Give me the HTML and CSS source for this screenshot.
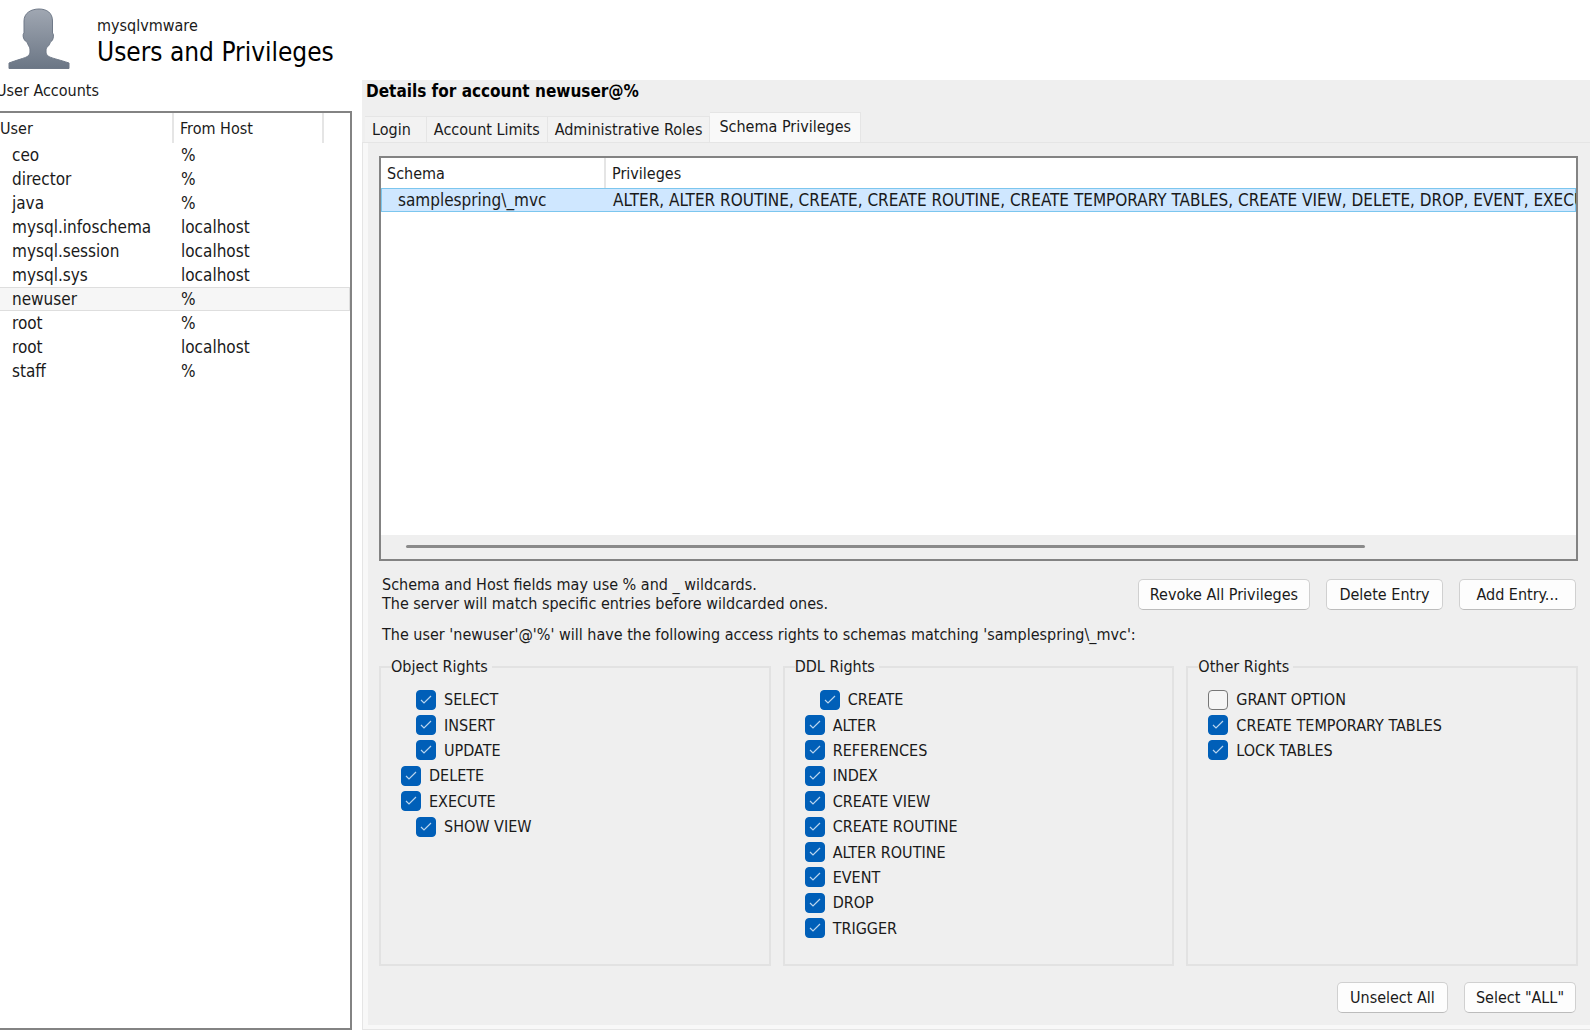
FILE: index.html
```
<!DOCTYPE html>
<html lang="en">
<head>
    <meta charset="UTF-8">
    <meta name="viewport" content="width=device-width, initial-scale=1.0">
    <title>Users and Privileges</title>
    <link rel="stylesheet" href="styles.css">
</head>
<body>
    <header class="page-header">
        <svg class="avatar" viewBox="0 0 62 62" aria-hidden="true">
            <defs>
                <linearGradient id="avatar-fill" x1="0" y1="0" x2="0" y2="1">
                    <stop offset="0" stop-color="#a0a7b2"/>
                    <stop offset="1" stop-color="#6b7685"/>
                </linearGradient>
            </defs>
            <path d="M31 1C39 1 44.5 5 44.5 13L44.500 25C46 26 45.500 30 44.500 32C43.500 33.500 42.500 33.500 42 35C41 39 38 38 38 43C38 50 43 49 61 55V60.500H1V55C17 49 22 50 22 43C22 38 20.500 39 19.500 35C19 33.500 17.500 33.500 16.500 32C15 30 14.500 26 16 25L16 13C16 5 23 1 31 1Z" fill="url(#avatar-fill)" stroke="#6f7988" stroke-width="1"/>
        </svg>
        <div class="page-titles">
            <p class="server-name">mysqlvmware</p>
            <h1>Users and Privileges</h1>
        </div>
    </header>

    <main class="layout">
        <section class="sidebar">
            <h2 class="sidebar-title">User Accounts</h2>
            <div class="list-box user-list">
                <table class="list">
                    <colgroup><col class="col-user"><col class="col-host"><col></colgroup>
                    <thead>
                        <tr><th>User</th><th>From Host</th><th></th></tr>
                    </thead>
                    <tbody>
                        <tr><td>ceo</td><td>%</td><td></td></tr>
                        <tr><td>director</td><td>%</td><td></td></tr>
                        <tr><td>java</td><td>%</td><td></td></tr>
                        <tr><td>mysql.infoschema</td><td>localhost</td><td></td></tr>
                        <tr><td>mysql.session</td><td>localhost</td><td></td></tr>
                        <tr><td>mysql.sys</td><td>localhost</td><td></td></tr>
                        <tr class="current"><td>newuser</td><td>%</td><td></td></tr>
                        <tr><td>root</td><td>%</td><td></td></tr>
                        <tr><td>root</td><td>localhost</td><td></td></tr>
                        <tr><td>staff</td><td>%</td><td></td></tr>
                    </tbody>
                </table>
            </div>
        </section>

        <section class="details">
            <h2 class="details-title">Details for account newuser@%</h2>
            <div class="tabs" role="tablist">
                <button class="tab" role="tab">Login</button>
                <button class="tab" role="tab">Account Limits</button>
                <button class="tab" role="tab">Administrative Roles</button>
                <button class="tab active" role="tab" aria-selected="true">Schema Privileges</button>
            </div>

            <div class="tab-panel" role="tabpanel">
                <div class="list-box schema-list">
                    <div class="list-view">
                        <table class="list">
                            <colgroup><col class="col-schema"><col></colgroup>
                            <thead>
                                <tr><th>Schema</th><th>Privileges</th></tr>
                            </thead>
                            <tbody>
                                <tr class="selected">
                                    <td>samplespring\_mvc</td>
                                    <td>ALTER, ALTER ROUTINE, CREATE, CREATE ROUTINE, CREATE TEMPORARY TABLES, CREATE VIEW, DELETE, DROP, EVENT, EXECUTE</td>
                                </tr>
                            </tbody>
                        </table>
                    </div>
                    <div class="scrollbar"><div class="thumb"></div></div>
                </div>

                <div class="entry-bar">
                    <p class="hint">Schema and Host fields may use % and _ wildcards.<br>The server will match specific entries before wildcarded ones.</p>
                    <div class="buttons">
                        <button class="btn">Revoke All Privileges</button>
                        <button class="btn">Delete Entry</button>
                        <button class="btn">Add Entry...</button>
                    </div>
                </div>

                <p class="summary">The user 'newuser'@'%' will have the following access rights to schemas matching 'samplespring\_mvc':</p>

                <div class="rights">
                    <fieldset class="group">
                        <legend>Object Rights</legend>
                        <div class="checks">
                            <label class="check indent"><input type="checkbox" checked>SELECT</label>
                            <label class="check indent"><input type="checkbox" checked>INSERT</label>
                            <label class="check indent"><input type="checkbox" checked>UPDATE</label>
                            <label class="check"><input type="checkbox" checked>DELETE</label>
                            <label class="check"><input type="checkbox" checked>EXECUTE</label>
                            <label class="check indent"><input type="checkbox" checked>SHOW VIEW</label>
                        </div>
                    </fieldset>
                    <fieldset class="group">
                        <legend>DDL Rights</legend>
                        <div class="checks">
                            <label class="check indent"><input type="checkbox" checked>CREATE</label>
                            <label class="check"><input type="checkbox" checked>ALTER</label>
                            <label class="check"><input type="checkbox" checked>REFERENCES</label>
                            <label class="check"><input type="checkbox" checked>INDEX</label>
                            <label class="check"><input type="checkbox" checked>CREATE VIEW</label>
                            <label class="check"><input type="checkbox" checked>CREATE ROUTINE</label>
                            <label class="check"><input type="checkbox" checked>ALTER ROUTINE</label>
                            <label class="check"><input type="checkbox" checked>EVENT</label>
                            <label class="check"><input type="checkbox" checked>DROP</label>
                            <label class="check"><input type="checkbox" checked>TRIGGER</label>
                        </div>
                    </fieldset>
                    <fieldset class="group">
                        <legend>Other Rights</legend>
                        <div class="checks">
                            <label class="check"><input type="checkbox">GRANT OPTION</label>
                            <label class="check"><input type="checkbox" checked>CREATE TEMPORARY TABLES</label>
                            <label class="check"><input type="checkbox" checked>LOCK TABLES</label>
                        </div>
                    </fieldset>
                </div>

                <div class="buttons footer-buttons">
                    <button class="btn">Unselect All</button>
                    <button class="btn">Select "ALL"</button>
                </div>
            </div>
        </section>
    </main>
</body>
</html>
```
FILE: styles.css
```
* {
    margin: 0;
    padding: 0;
    box-sizing: border-box;
}

body {
    display: flex;
    flex-direction: column;
    min-height: 100vh;
    padding-bottom: 3px;
    overflow-x: hidden;
    background-color: #fff;
    color: #1a1a1a;
    font-family: Tahoma, "DejaVu Sans Condensed", "Noto Sans", sans-serif;
    font-size: 16px;
    line-height: 19px;
}

button {
    font: inherit;
    color: inherit;
}

/* Header */
.page-header {
    display: flex;
    gap: 27px;
    height: 80px;
    padding: 8px 8px 0;
}

.avatar {
    width: 62px;
    height: 62px;
}

.page-titles {
    padding-top: 8px;
}

h1 {
    color: #000;
    font-size: 26px;
    font-weight: normal;
    line-height: 34px;
}

.layout {
    display: flex;
    flex: 1;
    gap: 10px;
}

/* Lists */
.list-box {
    border: 2px solid #838383;
    background-color: #fff;
    overflow: hidden;
}

.list {
    width: 100%;
    table-layout: fixed;
    border-collapse: separate;
    border-spacing: 0;
    white-space: nowrap;
}

.list th {
    height: 30px;
    padding-left: 6px;
    border-right: 2px solid #e5e5e5;
    font-weight: normal;
    text-align: left;
}

.list th:last-child {
    border-right: 0;
}

.list td {
    height: 24px;
    padding-left: 7px;
    border: solid transparent;
    border-width: 1px 0;
    font-size: 17px;
}

.list td:first-child {
    padding-left: 16px;
}

/* Accounts, the first pixels run off the left edge */
.sidebar {
    display: flex;
    flex-direction: column;
    flex: 0 0 356px;
    margin-left: -4px;
}

.sidebar-title {
    height: 31px;
    font-size: 16px;
    font-weight: normal;
    line-height: 22px;
}

.user-list {
    flex: 1;
}

.user-list th:first-child {
    padding-left: 2px;
}

.user-list td:first-child {
    padding-left: 14px;
}

.col-user {
    width: 176px;
}

.col-host {
    width: 150px;
}

.current td {
    background-color: #f6f6f6;
    border-color: #dedede;
}

.current td:last-child {
    border-right: 1px solid #dedede;
}

/* Details */
.details {
    display: flex;
    flex-direction: column;
    flex: 1;
    min-width: 0;
    background-color: #efefef;
}

.details-title {
    height: 32px;
    padding-left: 4px;
    color: #000;
    font-size: 17px;
    line-height: 22px;
}

.tabs {
    display: flex;
    align-items: flex-end;
    height: 30px;
    padding-left: 3px;
}

.tab {
    height: 26px;
    padding: 0 7px;
    border: 1px solid #e5e5e5;
    border-left: 0;
    border-bottom: 0;
    background-color: #f2f2f2;
}

.tab:first-child {
    padding-right: 15px;
}

.tab.active {
    height: 30px;
    padding: 0 9px 3px;
    background-color: #f9f9f9;
}

.tab-panel {
    display: flex;
    flex-direction: column;
    flex: 1;
    padding: 13px 12px 16px 11px;
    border: solid #e5e5e5;
    border-width: 1px 0 1px 1px;
    box-shadow: inset 5px -4px 0 #f8f8f8;
}

.schema-list {
    display: flex;
    flex-direction: column;
    height: 405px;
    margin-left: 5px;
}

.list-view {
    flex: 1;
    overflow: hidden;
}

.col-schema {
    width: 225px;
}

.selected td {
    background-color: #cfe7ff;
    border-color: #7cc6ee;
}

.selected td:first-child {
    border-left: 1px solid #7cc6ee;
}

.selected td:last-child {
    border-right: 1px solid #7cc6ee;
}

.scrollbar {
    height: 24px;
    padding: 10px 211px 0 25px;
    background-color: #efefef;
}

.thumb {
    height: 3px;
    border-radius: 2px;
    background-color: #8a8a8a;
}

.entry-bar {
    display: flex;
    justify-content: space-between;
    align-items: center;
    padding: 14px 2px 0 8px;
}

.buttons {
    display: flex;
    gap: 16px;
}

.btn {
    min-width: 117px;
    height: 31px;
    padding: 0 11px;
    border: 1px solid #d0d0d0;
    border-bottom-color: #bcbcbc;
    border-radius: 5px;
    background-color: #fdfdfd;
}

.summary {
    padding: 12px 0 0 8px;
}

/* Rights groups */
.rights {
    display: grid;
    grid-template-columns: repeat(3, 1fr);
    gap: 12px;
    flex: 1;
    margin: 13px 0 16px 5px;
}

.group {
    padding: 10px 20px;
    border: 2px solid #e2e2e2;
}

.group legend {
    margin-left: -10px;
    padding: 0 4px 0 0;
}

.checks {
    display: grid;
    grid-template-rows: repeat(10, 1fr);
    height: 255px;
    padding-top: 1px;
}

.check {
    display: flex;
    align-items: center;
    gap: 8px;
}

.check.indent {
    padding-left: 15px;
}

.check input {
    appearance: none;
    width: 20px;
    height: 20px;
    border: 1px solid #777;
    border-radius: 4px;
    background-color: #f5f5f5;
}

.check input:checked {
    border-color: #005fb8;
    background: #005fb8 url("data:image/svg+xml,%3Csvg xmlns='http://www.w3.org/2000/svg' viewBox='0 0 18 18'%3E%3Cpath d='M4 9l3 3 7-7' fill='none' stroke='%23b8d4ee' stroke-width='1.2'/%3E%3C/svg%3E") center / 18px no-repeat;
}

.footer-buttons {
    justify-content: flex-end;
    padding-right: 2px;
}

.footer-buttons .btn {
    min-width: 111px;
}
```
